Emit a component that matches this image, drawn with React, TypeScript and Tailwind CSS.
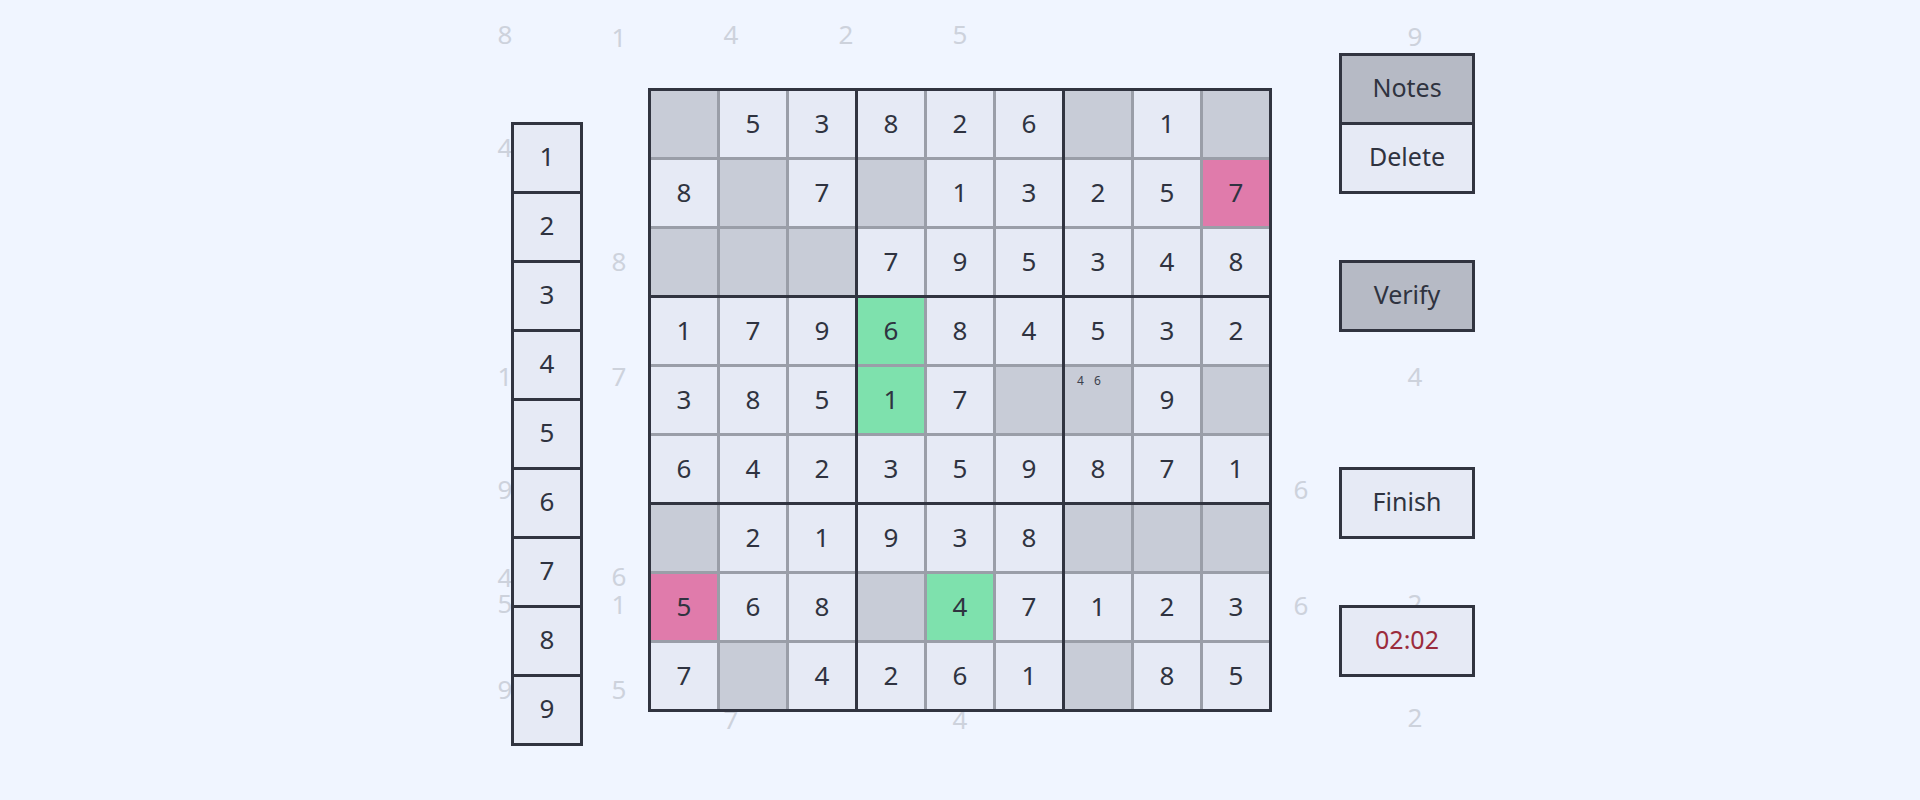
import React from 'react'

// board values: 0 = empty, the mark says how the cell is tinted
type Cell = { v: number; mark?: 'bad' | 'ok'; notes?: number[] }

const rows: Cell[][] = [
  [0, 5, 3, 8, 2, 6, 0, 1, 0],
  [8, 0, 7, 0, 1, 3, 2, 5, 7],
  [0, 0, 0, 7, 9, 5, 3, 4, 8],
  [1, 7, 9, 6, 8, 4, 5, 3, 2],
  [3, 8, 5, 1, 7, 0, 0, 9, 0],
  [6, 4, 2, 3, 5, 9, 8, 7, 1],
  [0, 2, 1, 9, 3, 8, 0, 0, 0],
  [5, 6, 8, 0, 4, 7, 1, 2, 3],
  [7, 0, 4, 2, 6, 1, 0, 8, 5]
].map(r => r.map(v => ({ v }) as Cell))

rows[1][8].mark = 'bad'
rows[7][0].mark = 'bad'
rows[3][3].mark = 'ok'
rows[4][3].mark = 'ok'
rows[7][4].mark = 'ok'
rows[4][6].notes = [4, 6]

const rain = [
  { d: '8', c: 'left-[505px] top-[34px]' },
  { d: '1', c: 'left-[619px] top-[37px]' },
  { d: '4', c: 'left-[731px] top-[34px]' },
  { d: '2', c: 'left-[846px] top-[34px]' },
  { d: '5', c: 'left-[960px] top-[34px]' },
  { d: '9', c: 'left-[1415px] top-[36px]' },
  { d: '4', c: 'left-[505px] top-[147px]' },
  { d: '8', c: 'left-[619px] top-[261px]' },
  { d: '1', c: 'left-[505px] top-[376px]' },
  { d: '7', c: 'left-[619px] top-[376px]' },
  { d: '4', c: 'left-[1415px] top-[376px]' },
  { d: '9', c: 'left-[505px] top-[489px]' },
  { d: '6', c: 'left-[1301px] top-[489px]' },
  { d: '4', c: 'left-[505px] top-[577px]' },
  { d: '6', c: 'left-[619px] top-[576px]' },
  { d: '5', c: 'left-[505px] top-[603px]' },
  { d: '1', c: 'left-[619px] top-[604px]' },
  { d: '6', c: 'left-[1301px] top-[605px]' },
  { d: '2', c: 'left-[1415px] top-[603px]' },
  { d: '9', c: 'left-[505px] top-[689px]' },
  { d: '5', c: 'left-[619px] top-[689px]' },
  { d: '7', c: 'left-[731px] top-[719px]' },
  { d: '4', c: 'left-[960px] top-[719px]' },
  { d: '2', c: 'left-[1415px] top-[717px]' }
]

export default function App() {
  return (
    <div className="relative h-[800px] w-full overflow-hidden bg-[#f0f5ff] font-['Noto_Sans',sans-serif] text-[#2f3340]">
      {rain.map((r, i) => (
        <span
          key={i}
          className={`absolute -translate-x-1/2 -translate-y-1/2 text-[26px] leading-none text-[#cdd2dc] ${r.c}`}
        >
          {r.d}
        </span>
      ))}

      <div className="relative flex w-full items-start justify-center pl-[66px] pt-[53px]">
        {/* number palette */}
        <div className="mt-[69px] flex flex-col gap-[3px] bg-[#313440] p-[3px]">
          {[1, 2, 3, 4, 5, 6, 7, 8, 9].map(n => (
            <div key={n} className="flex h-[66px] w-[66px] items-center justify-center bg-[#e6eaf5] pb-[3px] text-[26px]">
              {n}
            </div>
          ))}
        </div>

        {/* board */}
        <div className="ml-[65px] mt-[35px] grid w-[624px] grid-cols-3 gap-[3px] bg-[#313440] p-[3px]">
          {[0, 1, 2, 3, 4, 5, 6, 7, 8].map(b => (
            <div key={b} className="grid grid-cols-3 gap-[3px] bg-[#9a9ea8]">
              {[0, 1, 2, 3, 4, 5, 6, 7, 8].map(k => {
                const r = Math.floor(b / 3) * 3 + Math.floor(k / 3)
                const c = (b % 3) * 3 + (k % 3)
                return <BoardCell key={k} cell={rows[r][c]} />
              })}
            </div>
          ))}
        </div>

        {/* controls */}
        <div className="ml-[67px] flex w-[136px] flex-col">
          <Btn active>Notes</Btn>
          <Btn className="-mt-[3px]">Delete</Btn>
          <Btn active className="mt-[66px]">Verify</Btn>
          <Btn className="mt-[135px]">Finish</Btn>
          <Btn className="mt-[66px] text-[#9b2c3c]">02:02</Btn>
        </div>
      </div>
    </div>
  )
}

function BoardCell({ cell }: { cell: Cell }) {
  let bg = 'bg-[#e6eaf5]'
  if (cell.v === 0) bg = 'bg-[#c8ccd7]'
  if (cell.mark === 'bad') bg = 'bg-[#e07bab]'
  if (cell.mark === 'ok') bg = 'bg-[#7ee1ad]'

  if (cell.notes) {
    return (
      <div className={`flex h-[66px] w-[66px] items-start gap-[10px] pl-[12px] pt-[8px] text-[12px] leading-none text-[#3d414d] ${bg}`}>
        {cell.notes.map(n => (
          <span key={n}>{n}</span>
        ))}
      </div>
    )
  }

  return (
    <div className={`flex h-[66px] w-[66px] items-center justify-center pb-[2px] text-[26px] ${bg}`}>
      {cell.v > 0 ? cell.v : ''}
    </div>
  )
}

function Btn({
  children,
  active,
  className = ''
}: {
  children: React.ReactNode
  active?: boolean
  className?: string
}) {
  return (
    <div
      className={`flex h-[72px] w-[136px] items-center justify-center border-[3px] border-[#313440] pb-[2px] text-[25px] ${
        active ? 'bg-[#b6bac5]' : 'bg-[#e6eaf5]'
      } ${className}`}
    >
      {children}
    </div>
  )
}
